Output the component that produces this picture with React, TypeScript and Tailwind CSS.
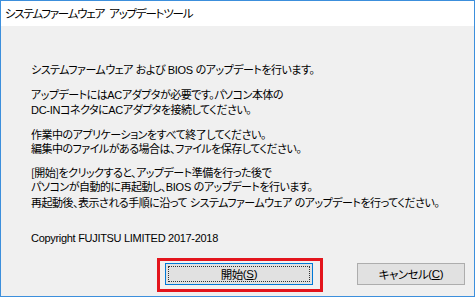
import type { ReactNode } from "react";

function L({ children }: { children: ReactNode }) {
  return <span className="font-['Liberation_Sans',sans-serif] tracking-[-0.3px]">{children}</span>;
}

function Para({ children, className }: { children: ReactNode; className?: string }) {
  return <p className={"whitespace-nowrap " + (className ?? "")}>{children}</p>;
}

export default function App() {
  return (
    <div className="w-[475px] h-[297px] border border-[#3c8fdc] bg-[#f0f0f0] flex flex-col font-['Noto_Sans_CJK_JP',sans-serif] text-black [font-feature-settings:'palt']">
      <div className="h-[25px] shrink-0 bg-white flex items-center pl-[4px] text-[11.5px] tracking-[-1.2px] whitespace-nowrap">
        システムファームウェア<span className="w-[5px]" /> アップデートツール
      </div>

      <div className="flex-1 flex flex-col pl-[30px] pt-[36px] pb-[11px] text-[11px] leading-[14.5px] tracking-[-0.5px]">
        <Para>
          システムファームウェア<L> </L>および<L> BIOS </L>のアップデートを行います。
        </Para>
        <Para className="mt-[9px]">
          アップデートには<L>AC</L>アダプタが必要です。パソコン本体の
          <br />
          <L>DC-IN</L>コネクタに<L>AC</L>アダプタを接続してください。
        </Para>
        <Para className="mt-[9px]">
          作業中のアプリケーションをすべて終了してください。
          <br />
          編集中のファイルがある場合は、ファイルを保存してください。
        </Para>
        <Para className="mt-[9px]">
          [開始]をクリックすると、アップデート準備を行った後で
          <br />
          パソコンが自動的に再起動し、<L>BIOS </L>のアップデートを行います。
          <br />
          再起動後、表示される手順に沿って<L> </L>システムファームウェア<L> </L>のアップデートを行ってください。
        </Para>
        <Para className="mt-[20px]">
          <L>Copyright FUJITSU LIMITED 2017-2018</L>
        </Para>

        <div className="mt-auto flex justify-end gap-[44px] pr-[9px]">
          <div className="relative">
            <button
              type="button"
              className="relative w-[148px] h-[22px] border border-[#0078d7] bg-[#e1e1e1] text-[11.5px] flex items-center justify-center"
            >
              <span className="absolute inset-[2px] border border-dotted border-[#333]" />
              開始<L>(<span className="underline">S</span>)</L>
            </button>
            <span className="absolute -top-[5px] -bottom-[7px] -left-[8px] -right-[10px] border-[3px] border-[#e3141c] pointer-events-none" />
          </div>
          <button
            type="button"
            className="w-[108px] h-[22px] border border-[#adadad] bg-[#e1e1e1] text-[11.5px] flex items-center justify-center"
          >
            キャンセル<L>(<span className="underline">C</span>)</L>
          </button>
        </div>
      </div>
    </div>
  );
}
